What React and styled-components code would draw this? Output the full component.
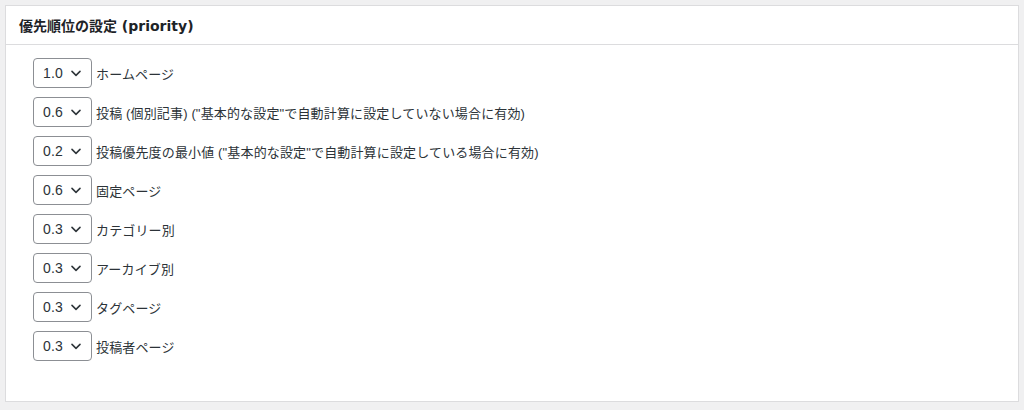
import styled, { createGlobalStyle } from "styled-components"

const Global = createGlobalStyle`
  body {
    margin: 0;
    background: #f0f0f1;
    font-family: "Liberation Sans", "Noto Sans CJK JP", sans-serif;
    color: #1d2327;
  }
`

const Page = styled.div`
  padding: 5px 5px 7px 5px;
`

const Box = styled.div`
  background: #fff;
  border: 1px solid #dcdcde;
  height: 397px;
  box-sizing: border-box;
`

const Header = styled.h2`
  margin: 0;
  height: 39px;
  box-sizing: border-box;
  border-bottom: 1px solid #dcdcde;
  padding: 0 13px;
  display: flex;
  align-items: center;
  font-family: "DejaVu Sans", "Noto Sans CJK JP", sans-serif;
  font-size: 14px;
  font-weight: 700;
  color: #1d2327;
`

const List = styled.ul`
  list-style: none;
  margin: 0;
  padding: 13px 0 0 27px;
  display: flex;
  flex-direction: column;
  gap: 9px;
`

const Row = styled.li`
  display: flex;
  align-items: center;
  gap: 4px;
  font-size: 13px;
  color: #2c3338;
  letter-spacing: 0.15px;
`

const SelectBox = styled.div`
  width: 59px;
  height: 30px;
  box-sizing: border-box;
  border: 1px solid #8c8f94;
  border-radius: 4px;
  display: flex;
  align-items: center;
  justify-content: space-between;
  padding: 0 10px 0 9px;
  font-size: 14px;
  color: #2c3338;
`

const Chevron = () => (
  <svg width="10" height="7" viewBox="0 0 10 7" fill="none">
    <path d="M1 1.4 L5 5.4 L9 1.4" stroke="#2c3338" strokeWidth="1.5" strokeLinecap="round" strokeLinejoin="round" />
  </svg>
)

const rows = [
  ["1.0", "ホームページ"],
  ["0.6", "投稿 (個別記事) (\"基本的な設定\"で自動計算に設定していない場合に有効)"],
  ["0.2", "投稿優先度の最小値 (\"基本的な設定\"で自動計算に設定している場合に有効)"],
  ["0.6", "固定ページ"],
  ["0.3", "カテゴリー別"],
  ["0.3", "アーカイブ別"],
  ["0.3", "タグページ"],
  ["0.3", "投稿者ページ"],
]

export default function App() {
  return (
    <Page>
      <Global />
      <Box>
        <Header>優先順位の設定 (priority)</Header>
        <List>
          {rows.map(([v, label], i) => (
            <Row key={i}>
              <SelectBox>
                <span>{v}</span>
                <Chevron />
              </SelectBox>
              {label}
            </Row>
          ))}
        </List>
      </Box>
    </Page>
  )
}
